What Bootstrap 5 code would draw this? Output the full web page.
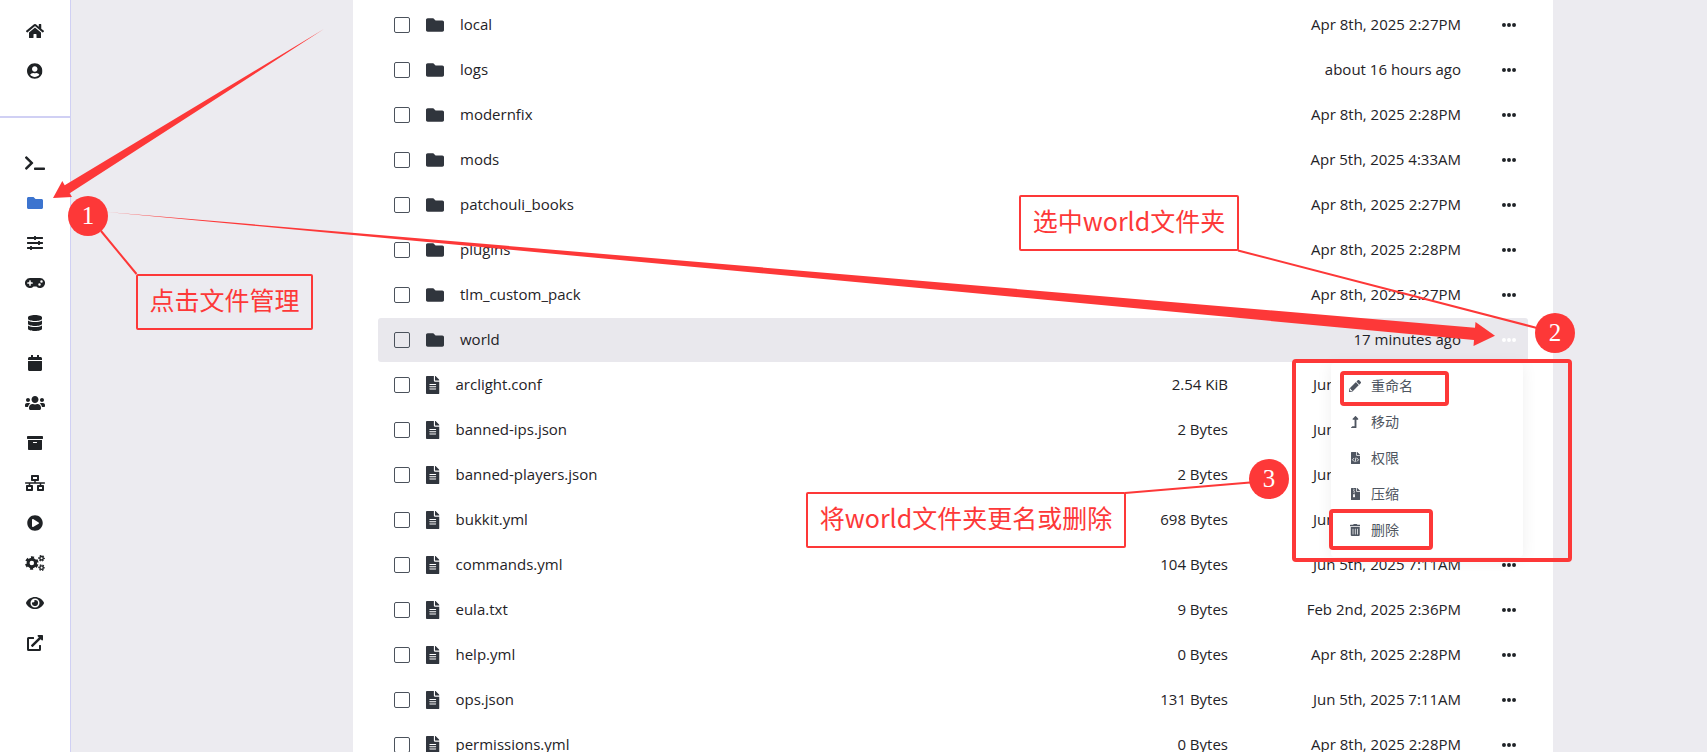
<!DOCTYPE html>
<html lang="zh-CN">
<head>
<meta charset="utf-8">
<meta name="viewport" content="width=device-width, initial-scale=1">
<title>文件管理</title>
<link href="https://cdn.jsdelivr.net/npm/bootstrap@5.3.0/dist/css/bootstrap.min.css" rel="stylesheet">
<style>
  :root { --ink: #1f2327; --note: #fd3838; --line: #d0d0f4; --canvas: #ecebf0; }
  body { font-family: "Open Sans", "Noto Sans CJK SC", sans-serif; font-size: 15px; color: var(--ink); background: var(--canvas); }
  .ico { height: 16px; width: auto; fill: currentColor; display: block; }
  .rail { width: 71px; border-right: 1px solid var(--line); }
  .rail a { height: 40px; color: #1f2225; }
  .rail a.active { color: #3c74cf; }
  .rail-top { padding: 11px 0 25px; border-bottom: 2px solid var(--line); }
  .rail-main { padding-top: 25px; }
  .stage { padding-left: 128px; }
  .panel { max-width: 1200px; padding: 2px 25px 0; }
  .files { border-collapse: separate; border-spacing: 0 1px; table-layout: fixed; }
  .files td { height: 44px; padding: 0; vertical-align: middle; white-space: nowrap; line-height: 20px; }
  .files td.text-end { padding-bottom: 2px; }
  .files label span { padding-bottom: 2px; }
  .files td:first-child { padding-left: 16px; border-radius: 3px 0 0 3px; }
  .files td:last-child { padding-right: 12px; border-radius: 0 3px 3px 0; }
  .files tr.picked td { background: #e9e8ed; }
  .files .form-check-input { width: 16px; height: 16px; margin: 0; border: 1px solid #4b525c; border-radius: 2px; background-color: transparent; display: block; }
  .files .ico { height: 18px; color: #30353d; }
  .c-check { width: 48px; } .c-size { width: 161px; } .c-date { width: 233px; } .c-more { width: 67px; }
  .more { padding: 0; border: 0; background: none; color: var(--ink); display: block; margin-left: auto; }
  .files .more .ico { height: 14px; color: inherit; }
  .picked .more { color: #fff; }
  .row-menu { top: 363px; right: 30px; width: 192px; padding: 5px 0 9px; border: 0; border-radius: 4px; box-shadow: 0 2px 16px rgba(0,0,0,.07); font-size: 14px; }
  .row-menu .dropdown-item { height: 36px; padding: 0 16px; color: #4f5661; }
  .row-menu .ico { height: 12px; }
  .row-menu .slot { width: 16px; }
  .row-menu .word { padding-bottom: 2px; }
  .notes { color: var(--note); pointer-events: none; z-index: 1100; }
  .note-box, .frame { position: absolute; border: 2px solid var(--note); border-radius: 2px; }
  .note-box { font: 25px/46px "Noto Sans CJK SC", sans-serif; height: 56px; text-align: center; white-space: nowrap; }
  .frame { border-width: 4px; border-radius: 4px; }
  .pin { position: absolute; width: 40px; height: 40px; border-radius: 50%; background: var(--note); color: #fff; font: 25px/40px "Liberation Serif", serif; text-align: center; }
</style>
</head>
<body>
<svg class="d-none" aria-hidden="true">
  <symbol id="home" viewBox="0 0 576 512"><path d="M280.37 148.26L96 300.11V464a16 16 0 0 0 16 16l112.06-.29a16 16 0 0 0 15.92-16V368a16 16 0 0 1 16-16h64a16 16 0 0 1 16 16v95.64a16 16 0 0 0 16 16.05L464 480a16 16 0 0 0 16-16V300L295.67 148.26a12.19 12.19 0 0 0-15.3 0zM571.6 251.47L488 182.56V44.05a12 12 0 0 0-12-12h-56a12 12 0 0 0-12 12v72.61L318.47 43a48 48 0 0 0-61 0L4.34 251.47a12 12 0 0 0-1.6 16.9l25.5 31A12 12 0 0 0 45.15 301l235.22-193.74a12.19 12.19 0 0 1 15.3 0L530.9 301a12 12 0 0 0 16.9-1.6l25.5-31a12 12 0 0 0-1.7-16.93z"/></symbol>
  <symbol id="user" viewBox="0 0 496 512"><path d="M248 8C111 8 0 119 0 256s111 248 248 248 248-111 248-248S385 8 248 8zm0 96c48.6 0 88 39.4 88 88s-39.4 88-88 88-88-39.4-88-88 39.4-88 88-88zm0 344c-58.7 0-111.3-26.6-146.5-68.2 18.8-35.4 55.6-59.8 98.5-59.8 2.4 0 4.8.4 7.1 1.1 13 4.2 26.6 6.9 40.9 6.9 14.3 0 28-2.7 40.9-6.9 2.3-.7 4.7-1.1 7.1-1.1 42.9 0 79.7 24.4 98.5 59.8C359.3 421.4 306.7 448 248 448z"/></symbol>
  <symbol id="terminal" viewBox="0 0 640 512"><path d="M257.981 272.971L63.638 467.314c-9.373 9.373-24.569 9.373-33.941 0L7.029 444.647c-9.357-9.357-9.375-24.522-.04-33.901L161.011 256 6.99 101.255c-9.335-9.379-9.317-24.544.04-33.901l22.667-22.667c9.373-9.373 24.569-9.373 33.941 0L257.981 239.03c9.373 9.372 9.373 24.568 0 33.941zM640 456v-32c0-13.255-10.745-24-24-24H312c-13.255 0-24 10.745-24 24v32c0 13.255 10.745 24 24 24h304c13.255 0 24-10.745 24-24z"/></symbol>
  <symbol id="folder" viewBox="0 0 512 512"><path d="M464 128H272l-64-64H48C21.49 64 0 85.49 0 112v288c0 26.51 21.49 48 48 48h416c26.51 0 48-21.49 48-48V176c0-26.51-21.49-48-48-48z"/></symbol>
  <symbol id="sliders" viewBox="0 0 512 512"><path d="M496 384H160v-16c0-8.800-7.200-16-16-16h-32c-8.800 0-16 7.200-16 16v16H16c-8.800 0-16 7.200-16 16v32c0 8.800 7.200 16 16 16h80v16c0 8.800 7.200 16 16 16h32c8.800 0 16-7.200 16-16v-16h336c8.800 0 16-7.200 16-16v-32c0-8.800-7.200-16-16-16zm0-160h-80v-16c0-8.800-7.200-16-16-16h-32c-8.800 0-16 7.200-16 16v16H16c-8.800 0-16 7.200-16 16v32c0 8.800 7.200 16 16 16h336v16c0 8.800 7.200 16 16 16h32c8.800 0 16-7.200 16-16v-16h80c8.800 0 16-7.200 16-16v-32c0-8.800-7.200-16-16-16zm0-160H288V48c0-8.800-7.200-16-16-16h-32c-8.800 0-16 7.200-16 16v16H16C7.200 64 0 71.200 0 80v32c0 8.800 7.200 16 16 16h208v16c0 8.800 7.200 16 16 16h32c8.800 0 16-7.200 16-16v-16h208c8.800 0 16-7.200 16-16V80c0-8.800-7.200-16-16-16z"/></symbol>
  <symbol id="gamepad" viewBox="0 0 640 512"><path d="M480.07 96H160a160 160 0 1 0 114.24 272h91.5A160 160 0 1 0 480.07 96zM248 268a12 12 0 0 1-12 12h-52v52a12 12 0 0 1-12 12h-24a12 12 0 0 1-12-12v-52H84a12 12 0 0 1-12-12v-24a12 12 0 0 1 12-12h52v-52a12 12 0 0 1 12-12h24a12 12 0 0 1 12 12v52h52a12 12 0 0 1 12 12zm216 76a40 40 0 1 1 40-40 40 40 0 0 1-40 40zm64-96a40 40 0 1 1 40-40 40 40 0 0 1-40 40z"/></symbol>
  <symbol id="database" viewBox="0 0 448 512"><path d="M448 73.143v45.714C448 159.143 347.667 192 224 192S0 159.143 0 118.857V73.143C0 32.857 100.333 0 224 0s224 32.857 224 73.143zM448 176v102.857C448 319.143 347.667 352 224 352S0 319.143 0 278.857V176c48.125 33.143 136.208 48.572 224 48.572S399.874 209.143 448 176zm0 160v102.857C448 479.143 347.667 512 224 512S0 479.143 0 438.857V336c48.125 33.143 136.208 48.572 224 48.572S399.874 369.143 448 336z"/></symbol>
  <symbol id="calendar" viewBox="0 0 448 512"><path d="M12 192h424c6.600 0 12 5.400 12 12v260c0 26.500-21.500 48-48 48H48c-26.500 0-48-21.500-48-48V204c0-6.600 5.400-12 12-12zm436-44v-36c0-26.500-21.500-48-48-48h-48V12c0-6.600-5.400-12-12-12h-40c-6.600 0-12 5.400-12 12v52H160V12c0-6.600-5.400-12-12-12h-40c-6.600 0-12 5.400-12 12v52H48C21.500 64 0 85.500 0 112v36c0 6.600 5.400 12 12 12h424c6.600 0 12-5.400 12-12z"/></symbol>
  <symbol id="users" viewBox="0 0 640 512"><path d="M96 224c35.3 0 64-28.7 64-64s-28.7-64-64-64-64 28.7-64 64 28.7 64 64 64zm448 0c35.3 0 64-28.7 64-64s-28.7-64-64-64-64 28.7-64 64 28.7 64 64 64zm32 32h-64c-17.6 0-33.5 7.1-45.1 18.6 40.3 22.1 68.9 62 75.1 109.4h66c17.7 0 32-14.3 32-32v-32c0-35.3-28.7-64-64-64zm-256 0c61.9 0 112-50.1 112-112S381.9 32 320 32 208 82.1 208 144s50.1 112 112 112zm76.8 32h-8.3c-20.8 10-43.9 16-68.5 16s-47.600-6-68.5-16h-8.300C179.600 288 128 339.600 128 403.200V432c0 26.500 21.500 48 48 48h288c26.500 0 48-21.500 48-48v-28.800c0-63.600-51.600-115.200-115.200-115.200zm-223.700-13.400C161.500 263.100 145.600 256 128 256H64c-35.300 0-64 28.700-64 64v32c0 17.700 14.300 32 32 32h65.900c6.300-47.400 34.900-87.300 75.200-109.400z"/></symbol>
  <symbol id="archive" viewBox="0 0 512 512"><path d="M32 448c0 17.700 14.300 32 32 32h384c17.700 0 32-14.300 32-32V160H32v288zm160-212c0-6.600 5.400-12 12-12h104c6.600 0 12 5.400 12 12v8c0 6.600-5.400 12-12 12H204c-6.600 0-12-5.400-12-12v-8zM480 32H32C14.300 32 0 46.300 0 64v48c0 8.800 7.200 16 16 16h480c8.800 0 16-7.200 16-16V64c0-17.700-14.300-32-32-32z"/></symbol>
  <symbol id="network" viewBox="0 0 640 512"><path d="M640 264v-16c0-8.840-7.160-16-16-16H344v-40h72c17.670 0 32-14.330 32-32V32c0-17.670-14.330-32-32-32H224c-17.670 0-32 14.330-32 32v128c0 17.670 14.330 32 32 32h72v40H16c-8.840 0-16 7.160-16 16v16c0 8.840 7.160 16 16 16h104v40H64c-17.670 0-32 14.330-32 32v128c0 17.670 14.330 32 32 32h160c17.670 0 32-14.330 32-32V352c0-17.670-14.330-32-32-32h-56v-40h304v40h-56c-17.670 0-32 14.330-32 32v128c0 17.670 14.330 32 32 32h160c17.670 0 32-14.330 32-32V352c0-17.670-14.330-32-32-32h-56v-40h104c8.840 0 16-7.160 16-16zM256 128V64h128v64H256zm-64 320H96v-64h96v64zm352 0h-96v-64h96v64z"/></symbol>
  <symbol id="play" viewBox="0 0 512 512"><path d="M256 8C119 8 8 119 8 256s111 248 248 248 248-111 248-248S393 8 256 8zm115.700 272l-176 101c-15.800 8.800-35.700-2.500-35.700-21V152c0-18.400 19.800-29.800 35.700-21l176 107c16.400 9.200 16.400 32.900 0 42z"/></symbol>
  <symbol id="cogs" viewBox="0 0 640 512">
    <g fill="none" stroke="currentColor">
      <circle cx="218" cy="256" r="120" stroke-width="96"/><circle cx="218" cy="256" r="182" stroke-width="70" stroke-dasharray="100 90.590" stroke-dashoffset="-45.300"/>
      <circle cx="530" cy="104" r="56" stroke-width="46"/><circle cx="530" cy="104" r="86" stroke-width="40" stroke-dasharray="50 40.060" stroke-dashoffset="25"/>
      <circle cx="530" cy="404" r="56" stroke-width="46"/><circle cx="530" cy="404" r="86" stroke-width="40" stroke-dasharray="50 40.060" stroke-dashoffset="25"/>
    </g>
  </symbol>
  <symbol id="eye" viewBox="0 0 576 512"><path d="M572.520 241.400C518.290 135.590 410.930 64 288 64S57.680 135.640 3.480 241.410a32.350 32.350 0 0 0 0 29.190C57.710 376.410 165.070 448 288 448s230.320-71.640 284.520-177.410a32.350 32.350 0 0 0 0-29.190zM288 400a144 144 0 1 1 144-144 143.930 143.930 0 0 1-144 144zm0-240a95.310 95.310 0 0 0-25.310 3.790 47.850 47.850 0 0 1-66.900 66.900A95.780 95.780 0 1 0 288 160z"/></symbol>
  <symbol id="external" viewBox="0 0 512 512"><path d="M432 320H400a16 16 0 0 0-16 16V448H64V128H208a16 16 0 0 0 16-16V80a16 16 0 0 0-16-16H48A48 48 0 0 0 0 112V464a48 48 0 0 0 48 48H400a48 48 0 0 0 48-48V336A16 16 0 0 0 432 320ZM488 0h-128c-21.370 0-32.050 25.910-17 41l35.730 35.730L135 320.370a24 24 0 0 0 0 34L157.670 377a24 24 0 0 0 34 0L435.280 133.320 471 169c15 15 41 4.500 41-17V24A24 24 0 0 0 488 0Z"/></symbol>
  <symbol id="file" viewBox="0 0 384 512"><path d="M224 136V0H24C10.700 0 0 10.700 0 24v464c0 13.300 10.700 24 24 24h336c13.300 0 24-10.700 24-24V160H248c-13.200 0-24-10.800-24-24zm64 236c0 6.600-5.400 12-12 12H108c-6.600 0-12-5.400-12-12v-8c0-6.600 5.400-12 12-12h168c6.600 0 12 5.400 12 12v8zm0-64c0 6.600-5.400 12-12 12H108c-6.600 0-12-5.400-12-12v-8c0-6.600 5.400-12 12-12h168c6.600 0 12 5.400 12 12v8zm0-72v8c0 6.600-5.400 12-12 12H108c-6.600 0-12-5.400-12-12v-8c0-6.600 5.400-12 12-12h168c6.600 0 12 5.400 12 12zm96-114.100v6.100H256V0h6.100c6.400 0 12.500 2.500 17 7l97.900 98c4.500 4.500 7 10.600 7 16.900z"/></symbol>
  <symbol id="dots" viewBox="0 0 512 512"><circle cx="72" cy="256" r="72"/><circle cx="256" cy="256" r="72"/><circle cx="440" cy="256" r="72"/></symbol>
  <symbol id="pencil" viewBox="0 0 512 512"><path fill-rule="evenodd" d="M497.900 142.100l-46.100 46.100c-4.700 4.700-12.300 4.700-17 0l-111-111c-4.700-4.700-4.700-12.300 0-17l46.100-46.100c18.700-18.700 49.100-18.700 67.900 0l60.100 60.100c18.800 18.700 18.800 49.100 0 67.900zM284.200 99.800L21.600 362.400.4 483.900c-2.900 16.400 11.400 30.600 27.800 27.800l121.500-21.300 262.600-262.600c4.700-4.700 4.700-12.300 0-17l-111-111c-4.800-4.700-12.400-4.700-17.100 0zM88 424h48v36.300l-64.500 11.300-31.100-31.100L51.700 376H88v48z"/></symbol>
  <symbol id="levelup" viewBox="0 0 320 512"><path d="M313.553 119.669L209.587 7.666c-9.485-10.214-25.676-10.229-35.174 0L70.438 119.669C56.232 134.969 62.989 160 85.999 160H152v272H68.024a11.996 11.996 0 0 0-8.485 3.515l-56 56C-4.021 499.074 1.333 512 12.024 512H208c13.255 0 24-10.745 24-24V160h66c22.999 0 29.776-25.016 15.553-40.331z"/></symbol>
  <symbol id="filecode" viewBox="0 0 384 512"><path d="M224 136V0H24C10.700 0 0 10.700 0 24v464c0 13.300 10.700 24 24 24h336c13.300 0 24-10.700 24-24V160H248c-13.200 0-24-10.800-24-24zM384 122v6H256V0h6c6 0 12 3 17 7l98 98c5 5 7 11 7 17z"/><path d="M130 260l-66 72 66 72M254 260l66 72-66 72M212 236l-40 196" fill="none" stroke="#fff" stroke-width="36"/></symbol>
  <symbol id="filezip" viewBox="0 0 384 512"><path d="M224 136V0H24C10.700 0 0 10.700 0 24v464c0 13.300 10.700 24 24 24h336c13.300 0 24-10.700 24-24V160H248c-13.200 0-24-10.800-24-24zM384 122v6H256V0h6c6 0 12 3 17 7l98 98c5 5 7 11 7 17z"/><path d="M96 32h32v32H96zm32 32h32v32h-32zM96 96h32v32H96zm32 32h32v32h-32zM96 160h32v32H96zm32 32h32v32h-32zM104 256h48l20 100a44 44 0 1 1-88 0z" fill="#fff"/></symbol>
  <symbol id="trash" viewBox="0 0 448 512"><path d="M32 464a48 48 0 0 0 48 48h288a48 48 0 0 0 48-48V128H32zm272-256a16 16 0 0 1 32 0v224a16 16 0 0 1-32 0zm-96 0a16 16 0 0 1 32 0v224a16 16 0 0 1-32 0zm-96 0a16 16 0 0 1 32 0v224a16 16 0 0 1-32 0zM432 32H312l-9.400-18.700A24 24 0 0 0 281.100 0H166.800a23.720 23.720 0 0 0-21.400 13.300L136 32H16A16 16 0 0 0 0 48v32a16 16 0 0 0 16 16h416a16 16 0 0 0 16-16V48a16 16 0 0 0-16-16z"/></symbol>
</svg>

<div class="d-flex vh-100 overflow-hidden position-relative">
  <nav class="rail bg-white flex-shrink-0" aria-label="主导航">
    <div class="rail-top" data-icons="home user"></div>
    <div class="rail-main" data-icons="terminal folder sliders gamepad database calendar users archive network play cogs eye external"></div>
  </nav>

  <main class="stage flex-grow-1">
    <div class="panel bg-white mx-auto position-relative">
      <table class="files w-100">
        <colgroup><col class="c-check"><col><col class="c-size"><col class="c-date"><col class="c-more"></colgroup>
        <tbody id="rows"></tbody>
      </table>
      <div class="row-menu dropdown-menu show" id="menu"></div>
    </div>
  </main>

  <div class="notes position-absolute top-0 start-0 w-100 h-100">
    <svg class="position-absolute top-0 start-0" width="1707" height="752" fill="currentColor" aria-hidden="true">
      <path d="M324 29L64.700 185.300 62.300 181 53 198 72 197 69.700 193.300Z"/>
      <path d="M107 212L1475 327.700 1475.500 322 1495 335.700 1473.500 346 1474 340Z"/>
      <path d="M101 231L136.500 274M1238 250.500L1537 328M1250 482.500L1125 493" fill="none" stroke="currentColor" stroke-width="2"/>
    </svg>
    <div class="note-box" style="left:136px;top:274px;width:177px">点击文件管理</div>
    <div class="note-box" style="left:1019px;top:195px;width:220px">选中world文件夹</div>
    <div class="note-box" style="left:806px;top:492px;width:320px">将world文件夹更名或删除</div>
    <div class="frame" style="left:1292px;top:359px;width:280px;height:203px"></div>
    <div class="frame" style="left:1340px;top:371px;width:109px;height:35px"></div>
    <div class="frame" style="left:1329px;top:509px;width:104px;height:41px"></div>
    <div class="pin" style="left:68px;top:196px">1</div>
    <div class="pin" style="left:1535px;top:313px">2</div>
    <div class="pin" style="left:1249px;top:459px">3</div>
  </div>
</div>

<script src="https://cdn.jsdelivr.net/npm/bootstrap@5.3.0/dist/js/bootstrap.bundle.min.js"></script>
<script>
  const widths = { home: 576, user: 496, terminal: 640, gamepad: 640, database: 448, calendar: 448, users: 640, network: 640, cogs: 640, eye: 576, file: 384, levelup: 320, filecode: 384, filezip: 384, trash: 448 };
  const icon = id => `<svg class="ico" viewBox="0 0 ${widths[id] || 512} 512" aria-hidden="true"><use href="#${id}"/></svg>`;

  document.querySelectorAll('[data-icons]').forEach(group => {
    group.innerHTML = group.dataset.icons.split(' ').map(id =>
      `<a href="#" aria-label="${id}" class="d-flex align-items-center justify-content-center${id === 'folder' ? ' active' : ''}">${icon(id)}</a>`).join('');
  });

  const entries = [
    ['local', '', 'Apr 8th, 2025 2:27PM'],
    ['logs', '', 'about 16 hours ago'],
    ['modernfix', '', 'Apr 8th, 2025 2:28PM'],
    ['mods', '', 'Apr 5th, 2025 4:33AM'],
    ['patchouli_books', '', 'Apr 8th, 2025 2:27PM'],
    ['plugins', '', 'Apr 8th, 2025 2:28PM'],
    ['tlm_custom_pack', '', 'Apr 8th, 2025 2:27PM'],
    ['world', '', '17 minutes ago'],
    ['arclight.conf', '2.54 KiB', 'Jun 5th, 2025 7:11AM'],
    ['banned-ips.json', '2 Bytes', 'Jun 5th, 2025 7:11AM'],
    ['banned-players.json', '2 Bytes', 'Jun 5th, 2025 7:11AM'],
    ['bukkit.yml', '698 Bytes', 'Jun 5th, 2025 7:11AM'],
    ['commands.yml', '104 Bytes', 'Jun 5th, 2025 7:11AM'],
    ['eula.txt', '9 Bytes', 'Feb 2nd, 2025 2:36PM'],
    ['help.yml', '0 Bytes', 'Apr 8th, 2025 2:28PM'],
    ['ops.json', '131 Bytes', 'Jun 5th, 2025 7:11AM'],
    ['permissions.yml', '0 Bytes', 'Apr 8th, 2025 2:28PM']
  ];
  document.getElementById('rows').innerHTML = entries.map(([name, size, date], i) => `
    <tr${name === 'world' ? ' class="picked"' : ''}>
      <td><input class="form-check-input" type="checkbox" id="f${i}"></td>
      <td><label for="f${i}" class="d-flex align-items-center gap-3">${icon(size ? 'file' : 'folder')}<span>${name}</span></label></td>
      <td class="text-end">${size}</td>
      <td class="text-end">${date}</td>
      <td><button type="button" class="more" aria-label="更多">${icon('dots')}</button></td>
    </tr>`).join('');

  document.getElementById('menu').innerHTML =
    [['pencil', '重命名'], ['levelup', '移动'], ['filecode', '权限'], ['filezip', '压缩'], ['trash', '删除']].map(([id, text]) =>
      `<button type="button" class="dropdown-item d-flex align-items-center gap-2"><span class="slot d-flex justify-content-center">${icon(id)}</span><span class="word">${text}</span></button>`).join('');
</script>
</body>
</html>
